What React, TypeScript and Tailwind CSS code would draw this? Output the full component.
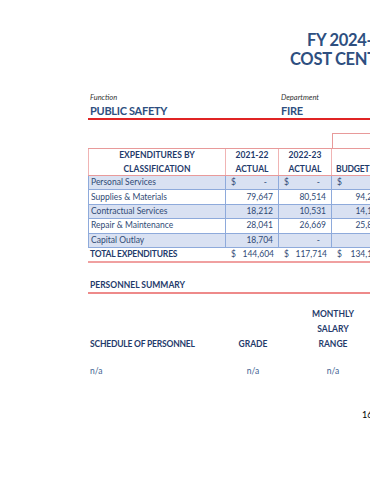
import React from "react";

const rows = [
  { label: "Personal Services", a: "-", b: "-", c: "-", dollar: true, shade: true },
  { label: "Supplies & Materials", a: "79,647", b: "80,514", c: "94,285", shade: false },
  { label: "Contractual Services", a: "18,212", b: "10,531", c: "14,150", shade: true },
  { label: "Repair & Maintenance", a: "28,041", b: "26,669", c: "25,800", shade: false },
  { label: "Capital Outlay", a: "18,704", b: "-", c: "-", shade: true },
];

function Money({ value, dollar }: { value: string; dollar?: boolean }) {
  const dash = value === "-";
  return (
    <div className="flex h-full items-center justify-between px-[5px]">
      <span>{dollar ? "$" : ""}</span>
      <span className={dash ? "pr-[6px]" : ""}>{value}</span>
    </div>
  );
}

export default function App() {
  return (
    <div
      className="relative h-[480px] w-[370px] overflow-hidden bg-white text-[#2f4a75]"
      style={{ fontFamily: "Lato, 'Open Sans', sans-serif" }}
    >
      <div className="w-[520px] pt-[31px]">
        <div className="text-[16.5px] font-bold leading-[19px] tracking-[-0.3px] text-[#2e4f80] whitespace-nowrap">
          <div className="pl-[307px]">FY 2024-25</div>
          <div className="pl-[290px]">COST CENTER</div>
        </div>

        {/* function / department */}
        <div className="ml-[88px] mt-[24px] flex border-b-2 border-[#e02424]">
          <div className="w-[193px] pl-[2px]">
            <div className="text-[7.5px] italic leading-[10px] text-[#333]">Function</div>
            <div className="text-[11px] font-bold leading-[15px] tracking-[-0.3px] text-[#2e4f80]">PUBLIC SAFETY</div>
          </div>
          <div>
            <div className="text-[7.5px] italic leading-[10px] text-[#333]">Department</div>
            <div className="text-[11px] font-bold leading-[15px] tracking-[-0.3px] text-[#2e4f80]">FIRE</div>
          </div>
        </div>

        {/* expenditures table */}
        <div className="ml-[88px] mt-[13px] text-[8.5px]">
          <div className="ml-[244px] h-[15px] border-l border-t border-[#e89a9a]" />
          <div className="flex h-[28px] border-y border-[#e89a9a] font-bold text-[#1f3b6b]">
            <div className="flex w-[138px] flex-col items-center justify-center border-l border-r border-[#f0b4b4] leading-[14px]">
              <span>EXPENDITURES BY</span>
              <span>CLASSIFICATION</span>
            </div>
            <div className="flex w-[53px] flex-col items-center justify-center border-r border-[#f0b4b4] leading-[14px]">
              <span>2021-22</span>
              <span>ACTUAL</span>
            </div>
            <div className="flex w-[53px] flex-col items-center justify-center border-r border-[#f0b4b4] leading-[14px]">
              <span>2022-23</span>
              <span>ACTUAL</span>
            </div>
            <div className="flex w-[70px] flex-col justify-center pl-[4px] leading-[14px] tracking-[-0.2px]">
              <span>&nbsp;</span>
              <span>BUDGET</span>
            </div>
          </div>
          {rows.map((r) => (
            <div
              key={r.label}
              className={`flex h-[14.4px] border-b border-[#8eaadb] leading-[13px] ${r.shade ? "bg-[#d9e1f2]" : "bg-white"}`}
            >
              <div className="flex w-[138px] items-center border-l border-r border-[#8eaadb] pl-[2px]">{r.label}</div>
              <div className="w-[53px] border-r border-[#8eaadb]">
                <Money value={r.a} dollar={r.dollar} />
              </div>
              <div className="w-[53px] border-r border-[#8eaadb]">
                <Money value={r.b} dollar={r.dollar} />
              </div>
              <div className="w-[55px]">
                <Money value={r.c} dollar={r.dollar} />
              </div>
            </div>
          ))}
          <div className="flex h-[15px] border-b-2 border-[#f0a0a0] font-bold leading-[13px]">
            <div className="flex w-[138px] items-center pl-[2px] tracking-[-0.2px] text-[#1f3b6b]">TOTAL EXPENDITURES</div>
            <div className="w-[53px] font-normal">
              <Money value="144,604" dollar />
            </div>
            <div className="w-[53px] font-normal">
              <Money value="117,714" dollar />
            </div>
            <div className="w-[55px] font-normal">
              <Money value="134,185" dollar />
            </div>
          </div>
        </div>

        {/* personnel summary */}
        <div className="ml-[88px] mt-[17px] border-b-2 border-[#ee8a8a] pb-[1px] pl-[2px] text-[8.5px] font-bold leading-[11px] text-[#1f3b6b]">
          PERSONNEL SUMMARY
        </div>
        <div className="ml-[88px] mt-[13px] flex items-end text-[8.5px] font-bold leading-[15px] text-[#1f3b6b]">
          <div className="w-[138px] pl-[2px] tracking-[-0.2px]">SCHEDULE OF PERSONNEL</div>
          <div className="w-[54px] text-center">GRADE</div>
          <div className="w-[106px] text-center">
            <div>MONTHLY</div>
            <div>SALARY</div>
            <div>RANGE</div>
          </div>
        </div>
        <div className="ml-[88px] mt-[12px] flex text-[8.5px] leading-[15px] text-[#3d5f92]">
          <div className="w-[138px] pl-[2px]">n/a</div>
          <div className="w-[54px] text-center">n/a</div>
          <div className="w-[106px] text-center">n/a</div>
        </div>

        <div className="mt-[30px] pl-[362px] text-[9px] leading-[12px] text-black">163</div>
      </div>
    </div>
  );
}
